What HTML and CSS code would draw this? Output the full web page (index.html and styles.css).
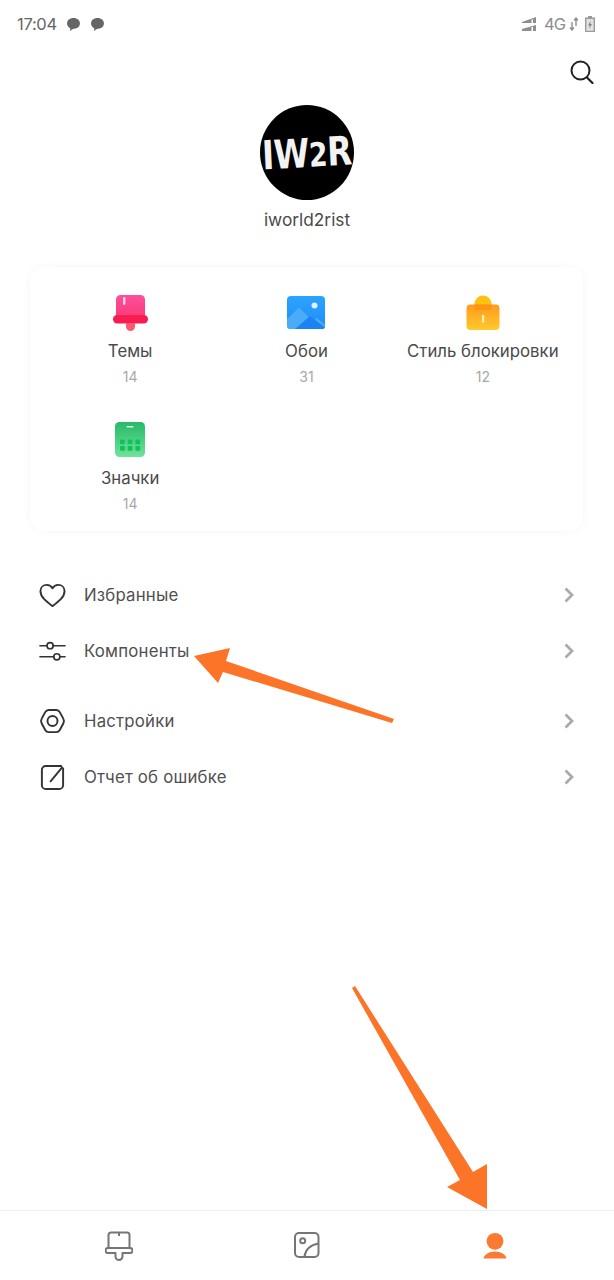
FILE: index.html
```html
<!DOCTYPE html>
<html lang="ru">
<head>
<meta charset="utf-8">
<title>Профиль</title>
<link rel="stylesheet" href="styles.css">
</head>
<body>
<div class="screen">
  <header class="status">
    <div class="status-left">
      <span class="time">17:04</span>
      <svg class="chat" viewBox="0 0 14 14"><path d="M7 1C3.4 1 1 3.2 1 6.1c0 2 1.2 3.600 3 4.400l-.2 2.600 3-2.100C10.700 11 13 8.900 13 6.100 13 3.200 10.600 1 7 1z"/></svg>
      <svg class="chat" viewBox="0 0 14 14"><path d="M7 1C3.4 1 1 3.2 1 6.1c0 2 1.2 3.600 3 4.400l-.2 2.600 3-2.100C10.700 11 13 8.900 13 6.100 13 3.200 10.600 1 7 1z"/></svg>
    </div>
    <div class="status-right">
      <svg class="signal" viewBox="0 0 14 14"><path d="M0 5 14 0v6H0z M0 12 14 8v6H0z" fill="#8e8e8e"/><path d="M9.500 2.500h1.500v3.500H9.500z M9.500 10h1.500v4H9.500z" fill="#fff"/></svg>
      <span class="net">4G</span>
      <svg class="updown" viewBox="0 0 10 14"><path d="M3 5v8M1 10.500 3 13l2-2.500" fill="none" stroke="#8e8e8e" stroke-width="1.400"/><path d="M7 1v8M5.200 3.500 7 1l1.800 2.500" fill="none" stroke="#8e8e8e" stroke-width="1.400"/></svg>
      <svg class="battery" viewBox="0 0 10 16"><path d="M3 0h4v1.500h3V16H0V1.500h3z" fill="#9a9a9a"/><rect x="1.400" y="3" width="7.200" height="11.800" fill="#e2e2e2"/><path d="M5.700 4.500 3.200 9.500h1.600L4.300 13l2.500-5H5.200z" fill="#7d7d7d"/></svg>
    </div>
  </header>

  <div class="search-row">
    <svg class="search" viewBox="0 0 24 24"><circle cx="10.500" cy="10.500" r="9" fill="none" stroke="#222" stroke-width="2"/><path d="M17 17.500 22.500 23" stroke="#222" stroke-width="2.200" stroke-linecap="round"/></svg>
  </div>

  <section class="profile">
    <div class="avatar"><span class="avatar-text">IW<span class="avatar-two">2</span>R</span></div>
    <div class="name">iworld2rist</div>
  </section>

  <section class="card">
    <div class="tile">
      <svg class="tile-icon" viewBox="0 0 38 38"><defs><linearGradient id="pink" x1="0" y1="0" x2="0" y2="1"><stop offset="0" stop-color="#fd4f9b"/><stop offset="1" stop-color="#fc3c7c"/></linearGradient></defs><path d="M5 4.500A4.500 4.500 0 0 1 9.500 0h20A4.500 4.500 0 0 1 34 4.500V21H5z" fill="url(#pink)"/><rect x="2" y="20" width="35" height="8.500" rx="4.200" fill="#f91c50"/><path d="M15 28h9v3.500a4.500 4.500 0 0 1-9 0z" fill="#fd5a70"/><rect x="12" y="2" width="2.400" height="8" rx="1.200" fill="#ffd3e3"/></svg>
      <div class="tile-label">Темы</div>
      <div class="tile-count">14</div>
    </div>
    <div class="tile">
      <svg class="tile-icon" viewBox="0 0 38 38"><defs><linearGradient id="sky" x1="0" y1="0" x2="0" y2="1"><stop offset="0" stop-color="#2ba4fb"/><stop offset="1" stop-color="#1f8dfb"/></linearGradient></defs><rect x="0" y="1" width="38" height="33" rx="4" fill="url(#sky)"/><circle cx="27.500" cy="10.500" r="3" fill="#dff1ff"/><path d="M0 24 12 12.500 26 26l4-3 8 7v.500a3.500 3.500 0 0 1-3.500 3.500h-31A3.500 3.500 0 0 1 0 30.500z" fill="#4aabf9"/><path d="M8 34 23 21l15 11.500a3.500 3.500 0 0 1-3.500 1.500z" fill="#1c83f3"/></svg>
      <div class="tile-label">Обои</div>
      <div class="tile-count">31</div>
    </div>
    <div class="tile">
      <svg class="tile-icon" viewBox="0 0 38 38"><defs><linearGradient id="amber" x1="0" y1="0" x2="0" y2="1"><stop offset="0" stop-color="#ff9a1c"/><stop offset="1" stop-color="#ffca2c"/></linearGradient></defs><path d="M10.500 9a8.500 8.500 0 0 1 17 0v5h-17z" fill="#ffc20e"/><rect x="2.500" y="9.500" width="33" height="25.500" rx="4" fill="url(#amber)"/><path d="M10.500 9.500h17v3.500a2 2 0 0 1-2 2h-13a2 2 0 0 1-2-2z" fill="#ff9416"/><rect x="18" y="20" width="2.200" height="7.500" fill="#fff3c9"/></svg>
      <div class="tile-label">Стиль блокировки</div>
      <div class="tile-count">12</div>
    </div>
    <div class="tile">
      <svg class="tile-icon" viewBox="0 0 38 38"><defs><linearGradient id="green" x1="0" y1="0" x2="0" y2="1"><stop offset="0" stop-color="#27b968"/><stop offset="1" stop-color="#6fe39a"/></linearGradient></defs><rect x="4" y="0" width="30" height="35" rx="4.500" fill="url(#green)"/><rect x="15.500" y="4" width="7" height="1.600" rx=".8" fill="#d8f7e3"/><g fill="#0fc259"><rect x="9" y="17.500" width="4.800" height="4.800" rx="1"/><rect x="16.700" y="17.500" width="4.800" height="4.800" rx="1"/><rect x="24.400" y="17.500" width="4.800" height="4.800" rx="1"/><rect x="9" y="24" width="4.800" height="4.800" rx="1"/><rect x="16.700" y="24" width="4.800" height="4.800" rx="1"/><rect x="24.400" y="24" width="4.800" height="4.800" rx="1"/></g></svg>
      <div class="tile-label">Значки</div>
      <div class="tile-count">14</div>
    </div>
  </section>

  <nav class="menu">
    <div class="menu-group">
      <div class="row">
        <svg class="row-icon" viewBox="0 0 28 28"><path d="M14 25C8 20.500 1.500 15.700 1.500 9.500 1.500 5.500 4.500 3 8 3c2.500 0 4.700 1.200 6 3.500C15.300 4.200 17.500 3 20 3c3.500 0 6.500 2.500 6.500 6.500C26.500 15.700 20 20.500 14 25z" class="line"/></svg>
        <span class="row-label">Избранные</span>
        <svg class="chev" viewBox="0 0 12 16"><path d="M2.500 1.500 9 8l-6.500 6.500"/></svg>
      </div>
      <div class="row">
        <svg class="row-icon" viewBox="0 0 28 28"><path d="M1 8h7.500M14.500 8H27M1 19.500h14.500M21.500 19.500H27" class="line thin"/><circle cx="11.500" cy="8" r="3.200" class="line thin"/><circle cx="18.500" cy="19.500" r="3.200" class="line thin"/></svg>
        <span class="row-label">Компоненты</span>
        <svg class="chev" viewBox="0 0 12 16"><path d="M2.500 1.500 9 8l-6.500 6.500"/></svg>
      </div>
    </div>
    <div class="menu-group">
      <div class="row">
        <svg class="row-icon" viewBox="0 0 28 28"><path d="M10 2h8a4 4 0 0 1 3.400 2l3.800 7a5 5 0 0 1 0 5l-3.800 7a4 4 0 0 1-3.400 2h-8a4 4 0 0 1-3.400-2l-3.800-7a5 5 0 0 1 0-5l3.800-7A4 4 0 0 1 10 2z" class="line"/><circle cx="14" cy="13.500" r="5.200" class="line"/></svg>
        <span class="row-label">Настройки</span>
        <svg class="chev" viewBox="0 0 12 16"><path d="M2.500 1.500 9 8l-6.500 6.500"/></svg>
      </div>
      <div class="row">
        <svg class="row-icon" viewBox="0 0 28 28"><path d="M23 2H7a4 4 0 0 0-4 4v16a4 4 0 0 0 4 4h14a4 4 0 0 0 4-4V4.500" class="line"/><path d="M12 18 24 3.500" class="line"/></svg>
        <span class="row-label">Отчет об ошибке</span>
        <svg class="chev" viewBox="0 0 12 16"><path d="M2.500 1.500 9 8l-6.500 6.500"/></svg>
      </div>
    </div>
  </nav>

  <footer class="tabbar">
    <div class="tab">
      <svg class="tab-icon" viewBox="0 0 28 30"><path d="M3.500 17V4a2.500 2.500 0 0 1 2.500-2.500h16A2.500 2.500 0 0 1 24.500 4v13M14 1.500v3.500" class="tab-line"/><path d="M3 17h22a2.500 2.500 0 0 1 0 5h-7.500v3.500a3.500 3.500 0 0 1-7 0V22H3a2.500 2.500 0 0 1 0-5z" class="tab-line"/></svg>
    </div>
    <div class="tab">
      <svg class="tab-icon" viewBox="0 0 28 30"><rect x="2" y="2" width="23.500" height="24" rx="4" class="tab-line"/><circle cx="9.700" cy="9.700" r="2.500" class="tab-line"/><path d="M11.500 25.500c1-7 6-11.500 14-13" class="tab-line"/></svg>
    </div>
    <div class="tab">
      <svg class="tab-icon" viewBox="0 0 28 30"><circle cx="14" cy="10.300" r="8.400" fill="#fb7a32"/><path d="M2.500 27.500c.8-4 5.500-7 11.500-7s10.700 3 11.500 7z" fill="#fb7a32"/></svg>
    </div>
  </footer>

  <svg class="arrows" viewBox="0 0 614 1280">
    <path d="M194 656 230 648 226 661 394 719 392 723 223 672 218 683z" fill="#fb7428"/>
    <path d="M352 988 355 986 473 1172 487 1164 487 1209 447 1187 460 1180z" fill="#fb7428"/>
  </svg>
</div>
</body>
</html>
```

FILE: styles.css
```css
* { box-sizing: border-box; }
html, body { margin: 0; padding: 0; background: #fff; }
body { font-family: Inter, "Noto Sans", sans-serif; color: #444; }

.screen { position: relative; width: 614px; height: 1280px; overflow: hidden; display: flex; flex-direction: column; background: #fff; }

.status { height: 48px; padding: 0 19px 0 17px; display: flex; justify-content: space-between; align-items: center; }
.status-left { display: flex; align-items: center; }
.time { font-size: 16.500px; color: #666; margin-right: 9px; letter-spacing: -0.3px; }
.chat { width: 15px; height: 15px; fill: #666; margin-right: 9px; }
.status-right { display: flex; align-items: center; color: #8e8e8e; }
.signal { width: 14px; height: 14px; margin-right: 8px; }
.net { font-size: 16.500px; letter-spacing: -1px; margin-right: 4px; }
.updown { width: 10px; height: 14px; margin-right: 6px; }
.battery { width: 10px; height: 16px; }

.search-row { height: 36px; padding: 12px 20px 0 0; display: flex; justify-content: flex-end; }
.search { width: 24px; height: 24px; }

.profile { margin-top: 21px; display: flex; flex-direction: column; align-items: center; }
.avatar { width: 94px; height: 95px; border-radius: 50%; background: #000; display: flex; align-items: center; justify-content: center; overflow: hidden; }
.avatar-text { color: #f2f2f2; font-family: "Liberation Sans Narrow", "DejaVu Sans Condensed", sans-serif; font-size: 40px; font-weight: 700; letter-spacing: -0.5px; white-space: nowrap; transform: scaleX(.9) rotate(-3deg); }
.avatar-two { font-size: 33px; }
.name { margin-top: 10px; font-size: 17.300px; line-height: 20px; color: #4a4a4a; }

.card { margin: 37px 31px 0 30px; height: 264px; padding: 25px 12px 0; border-radius: 14px; background: #fff; box-shadow: 0 0 8px rgba(0,0,0,.045); display: grid; grid-template-columns: repeat(3, 1fr); grid-auto-rows: 127px; }
.tile { display: flex; flex-direction: column; align-items: center; }
.tile-icon { width: 38px; height: 38px; margin-top: 3px; }
.tile-label { margin-top: 8px; font-size: 16.800px; line-height: 20px; color: #4a4a4a; white-space: nowrap; }
.tile-count { margin-top: 8px; font-size: 14px; line-height: 16px; color: #a8a8a8; }

.menu { margin-top: 36px; padding: 0 39px 0 39px; display: flex; flex-direction: column; gap: 14px; }
.row { height: 56px; display: flex; align-items: center; }
.row-icon { width: 27px; height: 27px; margin-right: 18px; flex: none; }
.row-label { flex: 1; font-size: 16.800px; letter-spacing: 0.2px; color: #505050; }
.chev { width: 12px; height: 16px; fill: none; stroke: #ababab; stroke-width: 2.800; }
.line { fill: none; stroke: #333; stroke-width: 2; stroke-linejoin: round; stroke-linecap: round; }
.line.thin { stroke-width: 1.700; }

.tabbar { position: absolute; left: 0; right: 0; bottom: 0; height: 70px; border-top: 1px solid #eeeeee; padding: 0 25px; display: grid; grid-template-columns: 1fr 1fr 1fr; background: #fff; }
.tab { display: flex; justify-content: center; padding-top: 20px; }
.tab-icon { width: 28px; height: 30px; }
.tab-line { fill: none; stroke: #767676; stroke-width: 2; stroke-linejoin: round; }

.arrows { position: absolute; left: 0; top: 0; width: 614px; height: 1280px; pointer-events: none; }
```
